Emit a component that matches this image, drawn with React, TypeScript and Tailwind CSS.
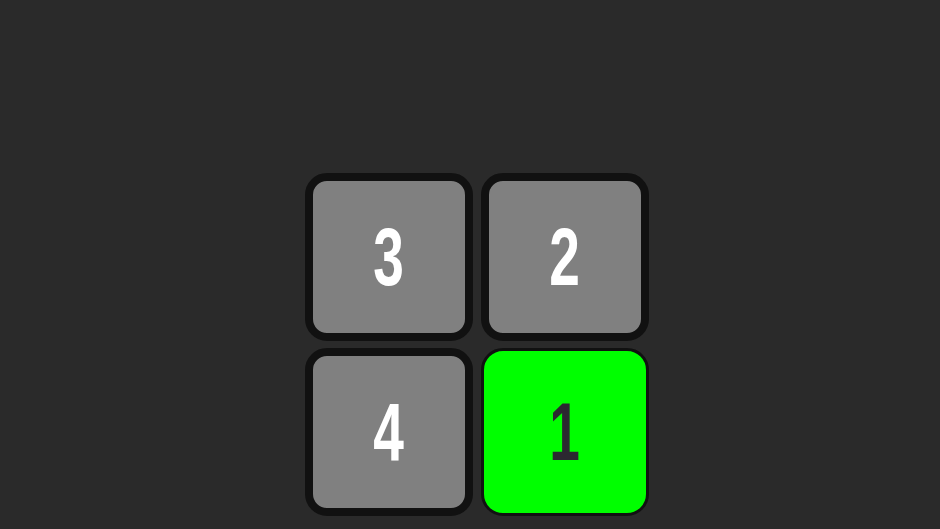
import React from 'react';

type Tile = { n: number; active?: boolean };

const tiles: Tile[] = [{ n: 3 }, { n: 2 }, { n: 4 }, { n: 1, active: true }];

const App: React.FC = () => {
  return (
    <div className="w-[940px] h-[529px] bg-[#2a2a2a] overflow-hidden pl-[305px] pt-[173px]">
      <div className="grid grid-cols-[168px_168px] grid-rows-[168px_168px] gap-x-[8px] gap-y-[7px]">
        {tiles.map((t) => (
          <div
            key={t.n}
            className={`rounded-[22px] flex items-center justify-center ${
              t.active
                ? 'bg-[#00ff00] border-[3px] border-[#111111] text-[#2b2830]'
                : 'bg-[#808080] border-[8px] border-[#111111] text-white'
            }`}
          >
            <span
              className="block font-bold leading-none text-[81px] scale-x-[0.68]"
              style={{ fontFamily: '"Liberation Sans", Arial, sans-serif' }}
            >
              {t.n}
            </span>
          </div>
        ))}
      </div>
    </div>
  );
};

export default App;
